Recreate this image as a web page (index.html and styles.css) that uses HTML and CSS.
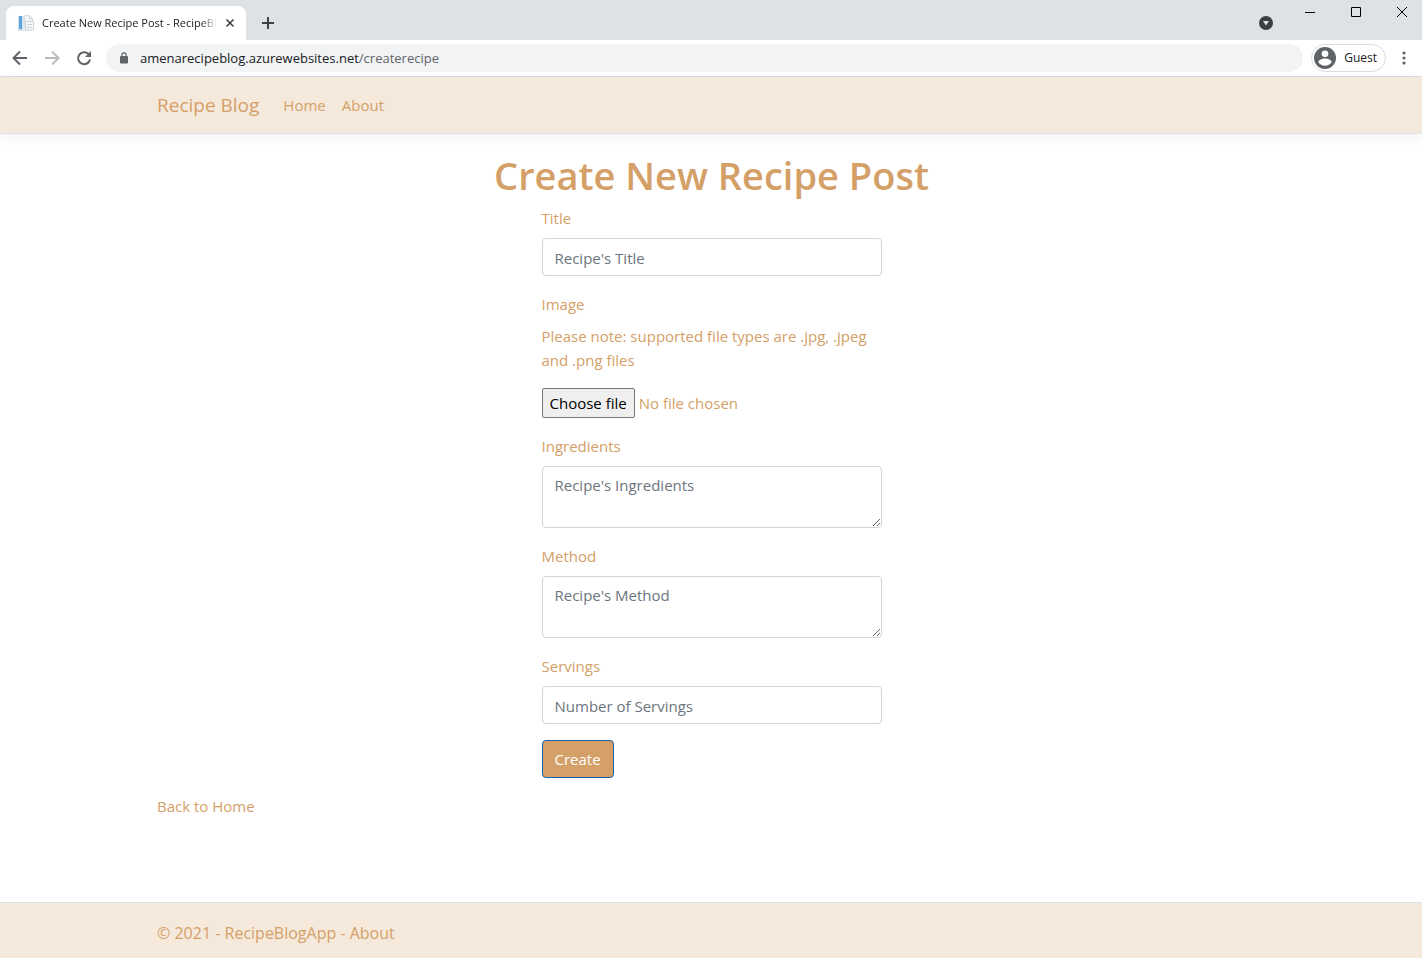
FILE: index.html
```html
<!DOCTYPE html>
<html lang="en">
<head>
<meta charset="utf-8">
<meta name="viewport" content="width=device-width, initial-scale=1">
<title>Create New Recipe Post - RecipeBlogApp</title>
<link rel="stylesheet" href="styles.css">
</head>
<body>
<div class="browser">
  <div class="tab-strip">
    <div class="tab">
      <svg class="favicon" width="16" height="16" viewBox="0 0 16 16" aria-hidden="true">
        <path d="M0 1h5v14H0z" fill="#cfe2f0"/>
        <path d="M1 1h3v13H1z" fill="#5fa5d8"/>
        <path d="M5 1h2v13H5z" fill="#dfe8ef"/>
        <path d="M6.500.5h5l3 3v4h-8z" fill="#f4f6f8" stroke="#d9dde2"/>
        <path d="M7.500 6.500h8v8.500h-8z" fill="#f7f8fa" stroke="#cdd3da"/>
        <path d="M11.500 1v3h3M9 9.500h5M9 12.500h5" fill="none" stroke="#cbd1d8"/>
        <path d="M0 15.500h15" stroke="#dcdfe3"/>
      </svg>
      <span class="tab-title">Create New Recipe Post - RecipeBlogApp</span>
      <button class="icon-button tab-close" type="button" aria-label="Close tab">
        <svg width="10" height="10" viewBox="0 0 10 10"><path d="M1.500 1.500l7 7M8.500 1.500l-7 7" stroke="#3c4043" stroke-width="1.600" fill="none"/></svg>
      </button>
    </div>
    <button class="icon-button new-tab" type="button" aria-label="New tab">
      <svg width="12" height="12" viewBox="0 0 12 12"><path d="M6 0v12M0 6h12" stroke="#3c4043" stroke-width="2"/></svg>
    </button>
    <div class="window-controls">
      <button class="icon-button tab-search" type="button" aria-label="Search tabs">
        <svg width="14" height="14" viewBox="0 0 14 14"><circle cx="7" cy="7" r="7" fill="#3c4043"/><path d="M4 5h6L7 9.500z" fill="#dee1e6"/></svg>
      </button>
      <button class="icon-button window-button" type="button" aria-label="Minimise">
        <svg width="10" height="10" viewBox="0 0 10 10"><path d="M0 5.500h10" stroke="#000"/></svg>
      </button>
      <button class="icon-button window-button" type="button" aria-label="Maximise">
        <svg width="10" height="10" viewBox="0 0 10 10"><path d="M.5.5h9v9h-9z" stroke="#000" fill="none"/></svg>
      </button>
      <button class="icon-button window-button" type="button" aria-label="Close">
        <svg width="10" height="10" viewBox="0 0 10 10"><path d="M0 0l10 10M10 0L0 10" stroke="#000"/></svg>
      </button>
    </div>
  </div>
  <div class="toolbar">
    <div class="history">
      <button class="icon-button" type="button" aria-label="Back">
        <svg width="16" height="16" viewBox="0 0 16 16"><path d="M15 8H2M8 1.500L1.500 8 8 14.500" fill="none" stroke="#5f6368" stroke-width="2"/></svg>
      </button>
      <button class="icon-button" type="button" aria-label="Forward">
        <svg width="16" height="16" viewBox="0 0 16 16"><path d="M1 8h13M8 1.500L14.500 8 8 14.500" fill="none" stroke="#babcbe" stroke-width="2"/></svg>
      </button>
      <button class="icon-button" type="button" aria-label="Reload">
        <svg width="16" height="16" viewBox="0 0 16 16"><path d="M14 9.500A6 6 0 1 1 12.300 3.800L14 5.500" fill="none" stroke="#5f6368" stroke-width="2"/><path d="M15 1v6H9z" fill="#5f6368"/></svg>
      </button>
    </div>
    <div class="address-bar">
      <svg width="10" height="12" viewBox="0 0 10 12" aria-hidden="true"><path d="M2 4h6a1 1 0 0 1 1 1v5.500a1 1 0 0 1-1 1H2a1 1 0 0 1-1-1V5a1 1 0 0 1 1-1z" fill="#5f6368"/><path d="M2.900 4.500V3a2.100 2.100 0 0 1 4.200 0v1.500" fill="none" stroke="#5f6368" stroke-width="1.100"/></svg>
      <span class="address">amenarecipeblog.azurewebsites.net<span class="address-path">/createrecipe</span></span>
    </div>
    <button class="profile" type="button">
      <svg width="22" height="22" viewBox="0 0 22 22" aria-hidden="true"><circle cx="11" cy="11" r="11" fill="#5f6368"/><circle cx="11" cy="6.800" r="3.300" fill="#fff"/><path d="M4.400 15.200c0-2.500 4-3.700 6.600-3.700s6.600 1.200 6.600 3.700a7.800 7.800 0 0 1-13.200 0z" fill="#fff"/></svg>
      <span>Guest</span>
    </button>
    <button class="icon-button menu-button" type="button" aria-label="Menu">
      <svg width="4" height="14" viewBox="0 0 4 14"><g fill="#5f6368"><circle cx="2" cy="2" r="1.600"/><circle cx="2" cy="7" r="1.600"/><circle cx="2" cy="12" r="1.600"/></g></svg>
    </button>
  </div>
</div>

<header class="site-header">
  <nav class="container navbar">
    <a class="brand" href="#">Recipe Blog</a>
    <a class="nav-link" href="#">Home</a>
    <a class="nav-link" href="#">About</a>
  </nav>
</header>

<main class="container content">
  <h1 class="page-title">Create New Recipe Post</h1>
  <form class="recipe-form">
    <div class="field">
      <label for="title">Title</label>
      <input class="control" id="title" type="text" placeholder="Recipe's Title">
    </div>
    <div class="field">
      <label for="image">Image</label>
      <p class="note">Please note: supported file types are .jpg, .jpeg and .png files</p>
      <div class="file-row">
        <input class="file-input" id="image" type="file" accept=".jpg,.jpeg,.png">
        <label class="file-button" for="image">Choose file</label>
        <span>No file chosen</span>
      </div>
    </div>
    <div class="field">
      <label for="ingredients">Ingredients</label>
      <textarea class="control" id="ingredients" placeholder="Recipe's Ingredients"></textarea>
    </div>
    <div class="field">
      <label for="method">Method</label>
      <textarea class="control" id="method" placeholder="Recipe's Method"></textarea>
    </div>
    <div class="field">
      <label for="servings">Servings</label>
      <input class="control" id="servings" type="text" inputmode="numeric" placeholder="Number of Servings">
    </div>
    <button class="submit" type="submit">Create</button>
  </form>
  <a class="back-link" href="#">Back to Home</a>
</main>

<footer class="site-footer">
  <div class="container">© 2021 - RecipeBlogApp - <a href="#">About</a></div>
</footer>
</body>
</html>
```
FILE: styles.css
```css
*, *::before, *::after { box-sizing: border-box; }

body {
  margin: 0;
  min-height: 100vh;
  display: flex;
  flex-direction: column;
  background: #fff;
  color: #d4a067;
  font: 15px/24px "Open Sans", "Noto Sans", sans-serif;
}
a { color: inherit; text-decoration: none; }
button, input, textarea { font: inherit; }
svg { display: block; flex: none; }

/* Browser frame */
.browser { border-bottom: 1px solid #dadce0; color: #202124; }
.tab-strip { display: flex; height: 40px; padding-left: 6px; background: #dee1e6; }
.tab {
  display: flex;
  align-items: center;
  width: 240px;
  margin-top: 6px;
  padding: 0 10px 0 12px;
  border-radius: 8px 8px 0 0;
  background: #fff;
}
.tab-title {
  flex: 1;
  min-width: 0;
  margin: 0 7px 0 8px;
  overflow: hidden;
  white-space: nowrap;
  font-size: 11px;
  -webkit-mask-image: linear-gradient(to left, transparent, #000 16px);
  mask-image: linear-gradient(to left, transparent, #000 16px);
}
.icon-button {
  display: grid;
  place-items: center;
  padding: 0;
  border: 0;
  background: transparent;
}
.tab-close { width: 12px; height: 16px; }
.new-tab { width: 28px; height: 28px; margin: 9px 0 0 8px; }
.window-controls { display: flex; margin-left: auto; margin-right: -3px; }
.tab-search { width: 28px; height: 28px; margin: 9px 7px 0 0; }
.window-button { width: 46px; height: 24px; }
.toolbar { display: flex; align-items: center; height: 36px; padding-right: 8px; }
.history { display: flex; gap: 16px; padding: 0 14px 0 12px; }
.address-bar {
  flex: 1;
  display: flex;
  align-items: center;
  gap: 11px;
  height: 28px;
  padding-left: 13px;
  border-radius: 14px;
  background: #f1f3f4;
  font-size: 13px;
}
.address-path { color: #5f6368; }
.profile {
  display: flex;
  align-items: center;
  gap: 8px;
  height: 28px;
  margin-left: 8px;
  padding: 0 8px 0 2px;
  border: 1px solid #dadce0;
  border-radius: 14px;
  background: #fff;
  color: #202124;
  font-size: 12px;
}
.menu-button { width: 20px; height: 28px; margin-left: 8px; }

/* Site */
.container { width: 100%; max-width: 1140px; margin: 0 auto; padding: 0 15px 0 16px; }
.site-header {
  padding: 8px 0;
  border-bottom: 1px solid #dee2e6;
  background: #f5e9dc;
  box-shadow: 0 4px 12px rgba(0, 0, 0, 0.05);
}
.navbar { display: flex; align-items: center; height: 40px; }
.brand { margin-right: 16px; font-size: 19px; }
.nav-link { padding: 8px; }
.content { flex: 1; padding-top: 16px; padding-bottom: 16px; }
.page-title {
  margin: 0 0 8px;
  padding-top: 2px;
  font-size: 38px;
  font-weight: 600;
  line-height: 46px;
  text-align: center;
}
.recipe-form { max-width: 340px; margin: 0 auto 16px; }
.field { margin-bottom: 16px; }
.field > label { display: block; margin-bottom: 8px; }
.control {
  display: block;
  width: 100%;
  height: 38px;
  padding: 6px 12px;
  border: 1px solid #ced4da;
  border-radius: 4px;
  background: #fff;
  color: #495057;
}
input.control { padding-top: 8px; }
.control::placeholder { color: #6c757d; opacity: 1; }
textarea.control { height: 62px; resize: vertical; }
.note { margin: 0 0 16px; }
.file-row { display: flex; align-items: center; gap: 4px; height: 30px; }
.file-input { position: absolute; width: 1px; height: 1px; opacity: 0; }
.file-button {
  padding: 2px 7px;
  border: 1px solid #767676;
  border-radius: 2px;
  background: #efefef;
  color: #000;
}
.submit {
  display: block;
  padding: 6px 12px;
  border: 1px solid #1861ac;
  border-radius: 4px;
  background: #d4a067;
  color: #fff;
}
.site-footer {
  padding: 18px 0 13px;
  border-top: 1px solid #dee2e6;
  background: #f5e9dc;
  font-size: 16px;
}
```
